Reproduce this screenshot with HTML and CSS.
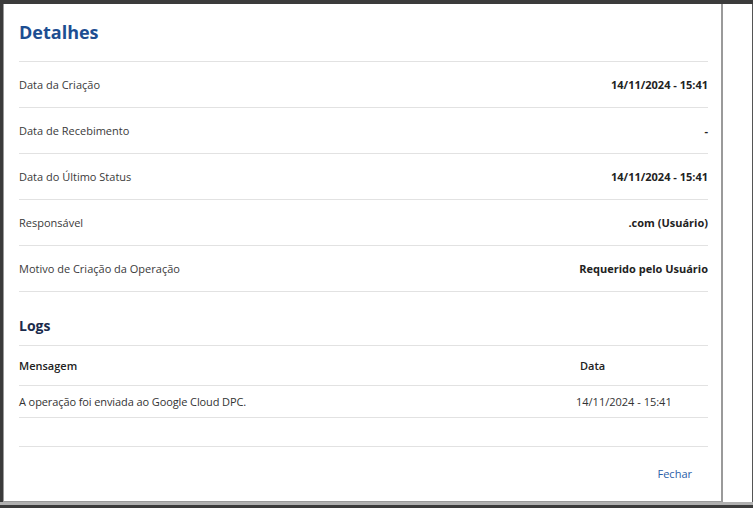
FILE: index.html
```html
<!DOCTYPE html>
<html lang="pt-BR">

<head>
    <meta charset="UTF-8">
    <meta name="viewport" content="width=device-width, initial-scale=1.0">
    <title>Detalhes</title>
    <link rel="stylesheet" href="styles.css">
</head>

<body>
    <div class="top-bar"></div>

    <div class="stage">
        <div class="side-bar"></div>

        <!-- Modal de detalhes -->
        <div class="modal">
            <h2 class="modal-title">Detalhes</h2>

            <div class="details">
                <div class="detail-row">
                    <span class="detail-label">Data da Criação</span>
                    <span class="detail-value">14/11/2024 - 15:41</span>
                </div>
                <div class="detail-row">
                    <span class="detail-label">Data de Recebimento</span>
                    <span class="detail-value">-</span>
                </div>
                <div class="detail-row">
                    <span class="detail-label">Data do Último Status</span>
                    <span class="detail-value">14/11/2024 - 15:41</span>
                </div>
                <div class="detail-row">
                    <span class="detail-label">Responsável</span>
                    <span class="detail-value">.com (Usuário)</span>
                </div>
                <div class="detail-row">
                    <span class="detail-label">Motivo de Criação da Operação</span>
                    <span class="detail-value">Requerido pelo Usuário</span>
                </div>
            </div>

            <h3 class="logs-title">Logs</h3>

            <div class="logs">
                <div class="log-row log-head">
                    <span>Mensagem</span>
                    <span class="log-date">Data</span>
                </div>
                <div class="log-row">
                    <span class="log-msg">A operação foi enviada ao Google Cloud DPC.</span>
                    <span class="log-date">14/11/2024 - 15:41</span>
                </div>
            </div>

            <div class="modal-footer">
                <a href="#" class="close-link">Fechar</a>
            </div>
        </div>

        <div class="outside"></div>
    </div>

    <div class="bottom-bar"></div>
</body>

</html>
```

FILE: styles.css
```css
body,
html {
    margin: 0;
    padding: 0;
    width: 753px;
    height: 508px;
    overflow: hidden;
    background-color: white;
    font-family: 'Open Sans', sans-serif;
}

.top-bar {
    height: 4px;
    background-color: #3b3b3b;
}

.stage {
    display: flex;
    height: 498px;
}

.side-bar {
    width: 3px;
    background-color: #3b3b3b;
}

.modal {
    width: 689px;
    padding: 0 13px 0 15px;
    border: 1px solid #9a9a9a;
    border-top: none;
    border-right-width: 2px;
    background-color: white;
    display: flex;
    flex-direction: column;
}

.outside {
    flex-grow: 1;
    border-right: 1px solid #555;
}

.bottom-bar {
    height: 3px;
    background-color: #b0b0b0;
    border-bottom: 3px solid #3b3b3b;
}

.modal-title {
    margin: 0;
    height: 58px;
    display: flex;
    align-items: center;
    font-size: 18px;
    font-weight: 700;
    color: #1d4e92;
}

.detail-row {
    display: flex;
    justify-content: space-between;
    align-items: center;
    height: 45px;
    border-top: 1px solid #e2e2e2;
    font-size: 11px;
}

.detail-row:last-child {
    border-bottom: 1px solid #e2e2e2;
}

.detail-label {
    color: #3a3a3a;
}

.detail-value {
    color: #222;
    font-weight: 700;
}

.logs-title {
    margin: 0;
    padding: 24px 0 9px;
    line-height: 20px;
    font-size: 14px;
    font-weight: 700;
    color: #1b2b4c;
}

.log-row {
    display: grid;
    grid-template-columns: 557px 1fr;
    align-items: center;
    height: 31px;
    border-top: 1px solid #e2e2e2;
    border-bottom: 1px solid #e2e2e2;
    font-size: 11px;
    color: #333;
}

.log-msg {
    letter-spacing: -0.1px;
}

.log-head {
    height: 39px;
    border-bottom: none;
    font-weight: 600;
    color: #222;
}

.log-head .log-date {
    padding-left: 4px;
}

.modal-footer {
    margin-top: 28px;
    height: 55px;
    border-top: 1px solid #e2e2e2;
    display: flex;
    justify-content: flex-end;
    align-items: center;
    padding-right: 16px;
}

.close-link {
    color: #2a5ea8;
    text-decoration: none;
    font-size: 11px;
}
```
